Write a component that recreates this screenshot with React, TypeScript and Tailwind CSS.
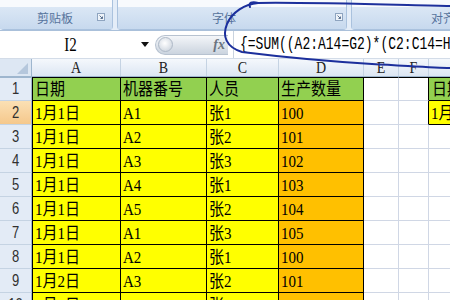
import React from 'react'

const SERIF = "font-['Liberation_Serif','Noto_Sans_CJK_SC',serif]"
const MONO = "font-['Liberation_Mono','Noto_Sans_CJK_SC',monospace]"
const CJK = "font-['Noto_Sans_CJK_SC',sans-serif]"
const SANS = "font-['Liberation_Sans',sans-serif]"

const GREEN = 'bg-[#92d050]'
const YELLOW = 'bg-[#ffff00]'
const ORANGE = 'bg-[#ffc000]'

const ROWS = [
  ['日期', '机器番号', '人员', '生产数量'],
  ['1月1日', 'A1', '张1', '100'],
  ['1月1日', 'A2', '张2', '101'],
  ['1月1日', 'A3', '张3', '102'],
  ['1月1日', 'A4', '张1', '103'],
  ['1月1日', 'A5', '张2', '104'],
  ['1月1日', 'A1', '张3', '105'],
  ['1月1日', 'A2', '张1', '100'],
  ['1月2日', 'A3', '张2', '101'],
  ['1月2日', 'A4', '张3', '102'],
]

const DATA_W = ['w-[89px] border-l border-l-black', 'w-[86px]', 'w-[72px]', 'w-[85px]']

const HEADERS = [
  { label: 'A', w: 'w-[89px]' },
  { label: 'B', w: 'w-[86px]' },
  { label: 'C', w: 'w-[72px]' },
  { label: 'D', w: 'w-[85px]' },
  { label: 'E', w: 'w-[35px]' },
  { label: 'F', w: 'w-[30px]' },
]

function Launcher() {
  return (
    <svg width="8" height="8" viewBox="0 0 8 8">
      <rect x="0.5" y="0.5" width="7" height="7" fill="#eef3f9" stroke="#8ea4c0" />
      <path d="M2.5 2.5 L5.5 5.5 M5.5 3.5 V5.5 H3.5" stroke="#5d7391" fill="none" />
    </svg>
  )
}

function CellText({ text }: { text: string }) {
  return (
    <span className={`inline-block origin-bottom scale-y-[1.14] whitespace-nowrap text-[15px] leading-[16px] text-black ${SERIF}`}>
      {text}
    </span>
  )
}

function DataRow({ cells, idx }: { cells: string[]; idx: number }) {
  const first = idx === 0
  const top = first ? 'border-t' : ''
  const selected = idx === 1
  return (
    <div className="flex h-[24px]">
      {/* row header */}
      <div
        className={`flex w-[32px] shrink-0 items-end justify-center border-r border-b border-r-[#9eb6ce] border-b-[#c5d3e3] pb-[2px] ${
          first ? 'border-t border-t-[#9eb6ce]' : ''
        } ${selected ? 'bg-gradient-to-b from-[#fbe0b4] to-[#f5c88c]' : 'bg-[#e3ebf6]'}`}
      >
        <span className={`inline-block origin-bottom scale-y-[1.3] text-[13px] leading-[14px] text-[#303030] ${SANS}`}>{idx + 1}</span>
      </div>

      {/* A-D */}
      {cells.map((c, i) => (
        <div
          key={i}
          className={`flex shrink-0 items-end overflow-hidden border-r border-b border-black pb-[2px] pl-[2px] ${top} ${DATA_W[i]} ${
            first ? GREEN : i === 3 ? ORANGE : YELLOW
          }`}
        >
          <CellText text={c} />
        </div>
      ))}

      {/* E, F */}
      <div className={`w-[35px] shrink-0 border-r border-b border-[#d0d7e5] bg-white ${first ? 'border-t border-t-black' : ''}`} />
      <div
        className={`w-[30px] shrink-0 border-b border-r bg-white ${first ? 'border-t border-t-black' : ''} ${
          idx < 2 ? 'border-r-black border-b-[#d0d7e5]' : 'border-[#d0d7e5]'
        }`}
      />

      {/* G */}
      {idx === 0 && (
        <div className={`flex flex-1 items-end overflow-hidden border-t border-b border-black pb-[2px] pl-[3px] ${GREEN}`}>
          <CellText text="日期" />
        </div>
      )}
      {idx === 1 && (
        <div className={`flex flex-1 items-end overflow-hidden border-b border-black pb-[2px] pl-[2px] ${YELLOW}`}>
          <CellText text="1月1日" />
        </div>
      )}
      {idx > 1 && <div className="flex-1 border-b border-[#d0d7e5] bg-white" />}
    </div>
  )
}

export default function App() {
  return (
    <div className="relative h-[300px] w-[450px] overflow-hidden bg-white">
      {/* Ribbon group labels */}
      <div className="flex h-[31px] gap-[4px] border-b border-[#aac0da] bg-[#e4edf8]">
        <div className="flex w-[113px] shrink-0 flex-col rounded-b-[4px] border-r border-b border-[#aac2de]">
          <div className="h-[7px] bg-[#f8fafd]" />
          <div className="relative flex flex-1 items-center justify-center bg-gradient-to-b from-[#dbe7f5] to-[#c7d9ee]">
            <span className={`pr-[2px] text-[12px] text-[#56739c] ${CJK}`}>剪贴板</span>
            <div className="absolute top-[6px] right-[7px]">
              <Launcher />
            </div>
          </div>
        </div>
        <div className="flex w-[230px] shrink-0 flex-col rounded-b-[4px] border-x border-b border-[#aac2de]">
          <div className="h-[7px] bg-[#f8fafd]" />
          <div className="relative flex flex-1 items-center justify-center bg-gradient-to-b from-[#dbe7f5] to-[#c7d9ee]">
            <span className={`pr-[16px] text-[12px] text-[#56739c] ${CJK}`}>字体</span>
            <div className="absolute top-[6px] right-[3px]">
              <Launcher />
            </div>
          </div>
        </div>
        <div className="flex flex-1 flex-col rounded-b-[4px] border-l border-b border-[#aac2de]">
          <div className="h-[7px] bg-[#f8fafd]" />
          <div className="flex flex-1 items-center bg-gradient-to-b from-[#dbe7f5] to-[#c7d9ee] pl-[79px]">
            <span className={`whitespace-nowrap text-[12px] text-[#56739c] ${CJK}`}>对齐方式</span>
          </div>
        </div>
      </div>

      {/* Formula bar */}
      <div className="flex h-[28px] items-center border-b border-[#d3dce8] bg-white">
        <div className="flex w-[155px] shrink-0 items-center">
          <div className="flex w-[141px] justify-center">
            <span className={`inline-block scale-y-[1.2] text-[15px] leading-[16px] text-black ${SERIF}`}>I2</span>
          </div>
          <svg width="8" height="5" viewBox="0 0 8 5">
            <polygon points="0,0 8,0 4,5" fill="#111" />
          </svg>
        </div>
        <div className="flex h-[20px] w-[73px] shrink-0 items-center justify-between rounded-l-full border border-r-0 border-[#b7c2d0] bg-gradient-to-b from-[#f4f6f9] to-[#cbd4df] pr-[3px] pl-[2px]">
          <div className="h-[15px] w-[15px] rounded-full border border-[#aeb9c7] bg-[radial-gradient(circle_at_45%_40%,#ffffff,#c3ccd8)]" />
          <span className={`text-[14px] font-bold italic text-[#6b7480] ${SERIF}`}>fx</span>
        </div>
        <div className="ml-[5px] flex h-full flex-1 items-center overflow-hidden border-l border-[#c9d3df] pl-[6px]">
          <span className={`inline-block scale-y-[1.35] whitespace-nowrap text-[13px] leading-[14px] text-black ${MONO}`}>
            {'{=SUM((A2:A14=G2)*(C2:C14=H2)*(D2:D14))}'}
          </span>
        </div>
      </div>

      {/* Column headers */}
      <div className="flex h-[18px] border-b border-[#9eb6ce] bg-gradient-to-b from-[#f5f8fc] to-[#dce6f3]">
        <div className="relative w-[32px] shrink-0 border-r border-[#9eb6ce] bg-[#dde7f3]">
          <svg className="absolute right-[3px] bottom-[2px]" width="11" height="11" viewBox="0 0 11 11">
            <polygon points="11,0 11,11 0,11" fill="#b5c7dc" />
          </svg>
        </div>
        {HEADERS.map((h) => (
          <div key={h.label} className={`flex shrink-0 items-center justify-center border-r border-[#c5d3e3] ${h.w}`}>
            <span className={`inline-block scale-y-[1.15] text-[14px] leading-[15px] text-[#222] ${SERIF}`}>{h.label}</span>
          </div>
        ))}
        <div className="flex-1" />
      </div>

      {/* Grid */}
      {ROWS.map((r, i) => (
        <DataRow key={i} cells={r} idx={i} />
      ))}

      {/* Pen annotation over the formula */}
      <svg className="pointer-events-none absolute inset-0" width="450" height="300" viewBox="0 0 450 300">
        <path
          d="M450 6 C400 5 300 2 258 3 C245 4 232 12 227 24 C222 36 226 47 242 52 C290 58 340 62 372 64 C410 66 435 68 450 68"
          fill="none"
          stroke="#1c2f9c"
          strokeWidth="2"
          strokeLinecap="round"
        />
        <path d="M258 3 C252 1 248 3 250 7" fill="none" stroke="#1c2f9c" strokeWidth="2" strokeLinecap="round" />
      </svg>
    </div>
  )
}
